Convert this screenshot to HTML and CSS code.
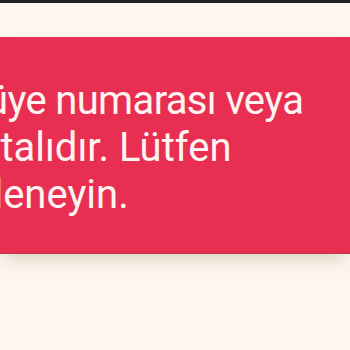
FILE: index.html
```html
<!DOCTYPE html>
<html lang="tr">
<head>
<meta charset="utf-8">
<link rel="stylesheet" href="styles.css">
</head>
<body>
<div class="topbar"></div>
<div class="page">
  <div class="alert">
    <p class="alert-text"><span class="line line-tight">Girilen üye numarası veya</span><span class="line">şifre hatalıdır. Lütfen</span><span class="line">tekrar deneyin.</span></p>
  </div>
</div>
</body>
</html>
```
FILE: styles.css
```css
html, body {
  margin: 0;
  padding: 0;
}
body {
  background: #fdf7ef;
  width: 350px;
  height: 350px;
  overflow: hidden;
  font-family: Roboto, "Noto Sans", sans-serif;
}
.topbar {
  height: 3px;
  background: #232323;
}
.page {
  padding-top: 34px;
}
.alert {
  background: #e82f51;
  padding: 40px 0 35px;
  overflow: hidden;
  box-shadow: 0 10px 18px -6px rgba(120, 100, 70, 0.3);
  border-bottom: 1px solid #c9324c;
}
.alert-text {
  margin: 0 0 0 -132px;
  white-space: nowrap;
  color: #fff4f2;
  font-size: 40px;
  line-height: 47px;
}
.line {
  display: block;
}
.line-tight {
  letter-spacing: -0.65px;
}
```
